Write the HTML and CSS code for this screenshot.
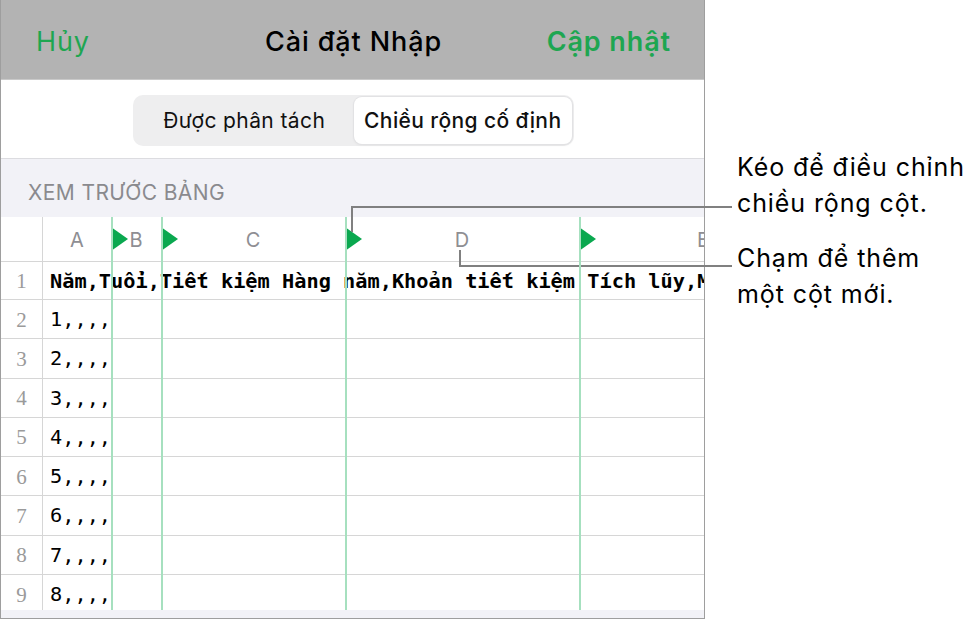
FILE: index.html
```html
<!DOCTYPE html>
<html lang="vi">
<head>
<meta charset="utf-8">
<title>Cài đặt Nhập</title>
<link rel="stylesheet" href="styles.css">
</head>
<body>
<div class="panel">
  <div class="nav">
    <span class="nav-cancel">Hủy</span>
    <span class="nav-title">Cài đặt Nhập</span>
    <span class="nav-update">Cập nhật</span>
  </div>
  <div class="seg-area">
    <div class="seg">
      <div class="seg-item">Được phân tách</div>
      <div class="seg-item selected">Chiều rộng cố định</div>
    </div>
  </div>
  <div class="section-head">XEM TRƯỚC BẢNG</div>
  <div class="table">
    <div class="hrow">
      <div class="rnum"></div>
      <div class="hcell col-a">A</div>
      <div class="hcell col-b marker">B</div>
      <div class="hcell col-c marker">C</div>
      <div class="hcell col-d marker">D</div>
      <div class="hcell col-e marker">E</div>
    </div>
    <div class="row first"><div class="rnum">1</div><div class="cell bold">Năm,Tuổi,Tiết kiệm Hàng năm,Khoản tiết kiệm Tích lũy,M</div></div>
    <div class="row"><div class="rnum">2</div><div class="cell">1,,,,</div></div>
    <div class="row"><div class="rnum">3</div><div class="cell">2,,,,</div></div>
    <div class="row"><div class="rnum">4</div><div class="cell">3,,,,</div></div>
    <div class="row"><div class="rnum">5</div><div class="cell">4,,,,</div></div>
    <div class="row"><div class="rnum">6</div><div class="cell">5,,,,</div></div>
    <div class="row"><div class="rnum">7</div><div class="cell">6,,,,</div></div>
    <div class="row"><div class="rnum">8</div><div class="cell">7,,,,</div></div>
    <div class="row last"><div class="rnum">9</div><div class="cell">8,,,,</div></div>
    <div class="breaks">
      <div class="brk-space"></div>
      <div class="brk b-b"><i class="brk-line"></i></div>
      <div class="brk b-c"><i class="brk-line"></i></div>
      <div class="brk b-d"><i class="brk-line"></i></div>
      <div class="brk b-e"><i class="brk-line"></i></div>
    </div>
  </div>
  <div class="strip"></div>
</div>
<div class="notes">
  <p class="note">Kéo để điều chỉnh<br>chiều rộng cột.</p>
  <p class="note">Chạm để thêm<br>một cột mới.</p>
</div>
<svg class="leaders" width="971" height="620" viewBox="0 0 971 620">
  <path d="M352 232 V207 H732" fill="none" stroke="#808080" stroke-width="2"/>
  <path d="M460 250 V266 H732" fill="none" stroke="#808080" stroke-width="2"/>
</svg>
</body>
</html>
```
FILE: styles.css
```css
* { box-sizing: border-box; margin: 0; padding: 0; }
html, body { background: #fff; }
body {
  width: 971px;
  height: 620px;
  overflow: hidden;
  display: flex;
  align-items: flex-start;
  position: relative;
  font-family: Inter, "Noto Sans", sans-serif;
  color: #000;
}
.panel {
  width: 705px;
  height: 619px;
  border: 1px solid #9e9e9e;
  border-top: none;
  display: flex;
  flex-direction: column;
  overflow: hidden;
  flex: none;
}
.nav {
  height: 80px;
  flex: none;
  background: #b3b3b3;
  border-bottom: 1px solid #c9c9c9;
  display: grid;
  grid-template-columns: 1fr auto 1fr;
  align-items: center;
  padding: 3px 33px 0 35px;
  font-size: 27px;
  letter-spacing: 0.9px;
}
.nav-cancel { color: #1ea651; justify-self: start; }
.nav-title { font-weight: 500; }
.nav-update { color: #1ea651; font-weight: 600; justify-self: end; }
.seg-area {
  height: 79px;
  flex: none;
  border-bottom: 1px solid #dcdce0;
  display: flex;
  justify-content: center;
  padding-top: 15px;
}
.seg {
  width: 441px;
  height: 51px;
  background: #eeeeef;
  border-radius: 10px;
  padding: 2px;
  display: grid;
  grid-template-columns: 1fr 1fr;
  margin-left: 2px;
}
.seg-item {
  display: flex;
  align-items: center;
  justify-content: center;
  font-size: 21px;
  letter-spacing: 0.4px;
  color: #111;
  border-radius: 8px;
}
.seg-item.selected {
  background: #fff;
  font-weight: 500;
  box-shadow: 0 0 0 1px #e2e2e4, 0 1px 3px rgba(0,0,0,0.08);
}
.section-head {
  height: 58px;
  flex: none;
  background: #f2f2f7;
  color: #8a8a8e;
  font-size: 21px;
  letter-spacing: 0.4px;
  padding: 21px 0 0 27px;
}
.table {
  height: 393px;
  flex: none;
  position: relative;
  overflow: hidden;
}
.hrow, .row {
  display: flex;
  border-bottom: 1px solid #d6d6d6;
}
.hrow { height: 45px; }
.row { height: 39.25px; }
.row.first { height: 38px; }
.row.last { border-bottom: none; }
.rnum {
  width: 42px;
  flex: none;
  border-right: 1px solid #d6d6d6;
  display: flex;
  align-items: center;
  justify-content: center;
  font-family: "Liberation Serif", serif;
  font-size: 21px;
  color: #9a9a9a;
  padding-top: 2px;
}
.hcell {
  flex: none;
  position: relative;
  display: flex;
  align-items: center;
  justify-content: center;
  font-size: 20px;
  color: #8e8e93;
  padding-top: 2px;
}
.col-a { width: 68px; }
.col-b { width: 50px; }
.col-c { width: 184px; }
.col-d { width: 234px; }
.col-e { width: 248px; }
.marker::before {
  content: "";
  position: absolute;
  left: 0;
  top: 10px;
  border-left: 17px solid #0aa84f;
  border-top: 12.5px solid transparent;
  border-bottom: 12.5px solid transparent;
}
.cell {
  flex: none;
  white-space: nowrap;
  display: flex;
  align-items: center;
  padding-left: 7px;
  font-family: "DejaVu Sans Mono", monospace;
  font-size: 20.3px;
  color: #000;
}
.cell.bold { font-weight: bold; }
.breaks {
  position: absolute;
  top: 0;
  left: 0;
  height: 393px;
  display: flex;
  pointer-events: none;
  z-index: 2;
}
.brk-space { width: 110px; flex: none; }
.brk {
  flex: none;
  display: flex;
}
.b-b { width: 50px; }
.b-c { width: 184px; }
.b-d { width: 234px; }
.b-e { width: 248px; }
.brk-line {
  display: block;
  width: 2px;
  height: 100%;
  background: #a6e0bf;
}
.strip {
  flex: 1;
  background: #f2f2f7;
}
.notes {
  margin-left: 32px;
  padding-top: 150px;
  display: flex;
  flex-direction: column;
  gap: 20px;
}
.note {
  font-size: 25px;
  letter-spacing: 0.9px;
  line-height: 35.5px;
  color: #000;
  white-space: nowrap;
}
.leaders {
  position: absolute;
  left: 0;
  top: 0;
  pointer-events: none;
}
```
